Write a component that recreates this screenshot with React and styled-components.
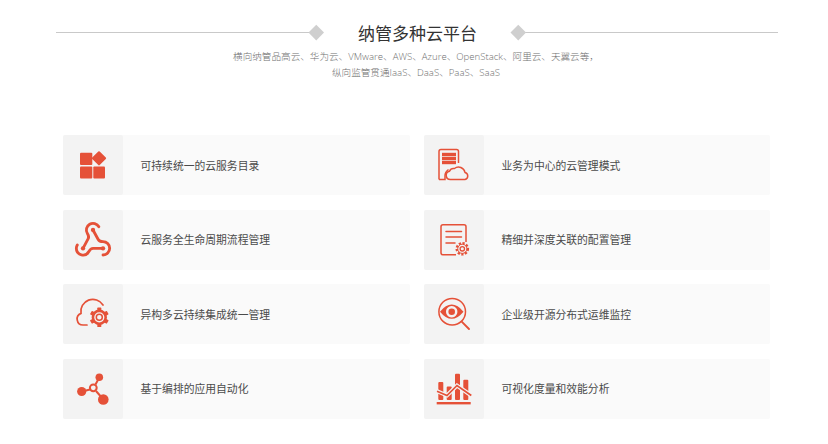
import React from "react";
import styled, { createGlobalStyle } from "styled-components";

const Global = createGlobalStyle`
  html, body { margin: 0; background: #fff; }
  body { font-family: "Open Sans", "Noto Sans CJK SC", sans-serif; }
`;
const Page = styled.div`
  width: 828px; height: 444px; overflow: hidden; box-sizing: border-box; padding-top: 20px;
`;
const Header = styled.header`
  display: flex; align-items: center; margin: 0 50px 0 56px; height: 25px;
`;
const Line = styled.div`
  flex: 1; height: 1px; background: #c9c9c9;
`;
const Diamond = styled.div`
  width: 10.5px; height: 10.5px; background: #cfcfcf; transform: rotate(45deg); flex: none;
  margin: ${p => (p.$side === "left" ? "0 3px 0 -8px" : "0 -8px 0 2px")};
`;
const Title = styled.h1`
  margin: 0; width: 186px; flex: none; text-align: center; font-weight: 400; font-size: 17px; line-height: 25px; color: #333;
  font-family: "Noto Sans CJK SC", sans-serif;
`;
const Sub = styled.p`
  margin: 0; padding: 4px 0 0 4px; text-align: center; font-size: 9.6px; line-height: 15.5px; color: #6f6f6f; font-weight: 300;
  font-family: "Open Sans", "Noto Sans CJK SC", sans-serif;
`;
const Grid = styled.div`
  display: grid; grid-template-columns: 347px 346px; column-gap: 14px; row-gap: 14.5px;
  margin: 55px 0 0 63px;
`;
const Card = styled.div`
  display: flex; align-items: center; height: 60px; background: #fafafa; border-radius: 2px;
`;
const IconBox = styled.div`
  width: 60px; height: 60px; flex: none; display: flex; align-items: center; justify-content: center;
  background: #f3f3f3; border-radius: 2px;
`;
const Label = styled.span`
  margin: -1px 0 0 17.5px; font-size: 10.8px; color: #4a4a4a; font-family: "Noto Sans CJK SC", sans-serif;
`;
const Svg = styled.svg`
  width: 40px; height: 40px; display: block; color: #e55138;
`;

const I = ({ children }) => (
  <Svg viewBox="0 0 40 40" fill="none" stroke="currentColor" strokeWidth="1.3">{children}</Svg>
);

const Catalog = () => (
  <I>
    <g fill="currentColor" stroke="none">
      <rect x="7" y="7.7" width="12.3" height="12.3" rx="1" />
      <rect x="7" y="21.5" width="12.3" height="12" rx="1" />
      <rect x="20.3" y="21.5" width="11.7" height="12" rx="1" />
      <rect x="20.7" y="8" width="10.6" height="10.6" rx="1" transform="rotate(45 26 13.3)" />
    </g>
  </I>
);
const Webhook = () => (
  <Svg viewBox="0 0 24 24" fill="none" stroke="currentColor" strokeWidth="1.7" strokeLinecap="round" strokeLinejoin="round">
    <path d="M18 16.98h-5.99c-1.1 0-1.95.94-2.48 1.9A4 4 0 0 1 2 17c.01-.7.2-1.4.57-2" />
    <path d="m6 17 3.13-5.78c.53-.97.1-2.18-.5-3.1a4 4 0 1 1 6.89-4.06" />
    <path d="m12 6 3.13 5.73C15.66 12.7 16.9 13 18 13a4 4 0 0 1 0 8" />
    <g fill="currentColor" stroke="none">
      <circle cx="12" cy="6" r="1.3" />
      <circle cx="6" cy="17" r="1.3" />
      <circle cx="18" cy="17" r="1.3" />
    </g>
  </Svg>
);
const gearTeeth = [0, 60, 120, 180, 240, 300];
const CloudGear = () => (
  <I>
    <path strokeWidth="1.7" strokeLinecap="round" d="M14 31 H10 A6 6 0 0 1 8 19.4 A12 12 0 0 1 30 11" />
    <g fill="currentColor" stroke="none">
      {gearTeeth.map(a => (
        <rect key={a} x="24.3" y="13.6" width="4" height="4" rx="0.6" transform={`rotate(${a} 26.3 23.3)`} />
      ))}
    </g>
    <circle cx="26.3" cy="23.3" r="6.4" strokeWidth="2.6" />
    <circle cx="26.3" cy="23.3" r="3" strokeWidth="1.5" />
  </I>
);
const Nodes = () => (
  <I>
    <g fill="currentColor" stroke="none">
      <circle cx="8.7" cy="22.5" r="4.6" />
      <circle cx="30.3" cy="30.5" r="5.3" />
      <circle cx="26.3" cy="8.2" r="3.8" />
    </g>
    <path strokeWidth="2" d="M9 22.5 L17 20.5 M22.5 15.5 L26 9 M23 22 L30 30" />
    <circle cx="20.3" cy="18.8" r="3.4" strokeWidth="2" />
  </I>
);
const ServerCloud = () => (
  <I>
    <path strokeWidth="1.5" d="M5 34.5 V6.5 A2 2 0 0 1 7 4.5 H22.5 A2 2 0 0 1 24.5 6.5 V18 M5 34.5 H11 V30.5 Q11 27 14.5 24.5" />
    <g fill="currentColor" stroke="none">
      <rect x="8" y="7.8" width="14" height="3.4" />
      <rect x="8" y="11.9" width="14" height="3.4" />
      <rect x="8" y="16" width="14" height="3.2" />
    </g>
    <path strokeWidth="1.5" fill="#f3f3f3" d="M16.5 34.5 A4.2 4.2 0 0 1 15.5 26.2 A4.5 4.5 0 0 1 20.5 23.5 A6.5 6.5 0 0 1 31 27.5 A3.6 3.6 0 0 1 31 34.5 Z" />
  </I>
);
const DocGear = () => (
  <I>
    <path strokeWidth="1.5" d="M22 34.8 H9 A2 2 0 0 1 7 32.8 V6.8 A2 2 0 0 1 9 4.8 H30 A2 2 0 0 1 32 6.8 V22" />
    <path strokeWidth="1.5" strokeLinecap="round" d="M12 11.5 H27.5 M12 17 H27.5 M12 23 H21" />
    <circle cx="28.3" cy="28.8" r="2.2" strokeWidth="1.3" />
    <circle cx="28.3" cy="28.8" r="5.6" strokeWidth="2.4" strokeDasharray="2.2 1.5" />
    <circle cx="28.3" cy="28.8" r="4.6" strokeWidth="1" />
  </I>
);
const EyeSearch = () => (
  <I>
    <circle cx="18.2" cy="17.7" r="13.3" strokeWidth="1.5" />
    <path strokeWidth="1.9" strokeLinecap="round" d="M27.7 27.7 L35 35" />
    <path fill="currentColor" stroke="none" fillRule="evenodd" d="M6 17.7 Q17.7 3.5 29.5 17.7 Q17.7 32 6 17.7 Z M17.7 12 a5.7 5.7 0 1 0 .01 0 Z" />
    <circle cx="17.7" cy="17.7" r="3.3" fill="currentColor" stroke="none" />
  </I>
);
const BarsChart = () => (
  <I>
    <g fill="currentColor" stroke="none">
      <rect x="4.3" y="13" width="5" height="18" rx="1" />
      <rect x="12.7" y="17.5" width="5" height="13.5" rx="1" />
      <rect x="21" y="4.8" width="5" height="26.2" rx="1" />
      <rect x="29.3" y="10.8" width="5" height="20.2" rx="1" />
      <rect x="2.7" y="33" width="34" height="2.4" />
    </g>
    <path stroke="#f3f3f3" strokeWidth="4" d="M3 22.2 L13 26.5 L23 16.5 L37.3 26.5" />
    <path strokeWidth="1.7" d="M3 22.2 L13 26.5 L23 16.5 L37.3 26.5" />
  </I>
);

const items = [
  [Catalog, "可持续统一的云服务目录"],
  [ServerCloud, "业务为中心的云管理模式"],
  [Webhook, "云服务全生命周期流程管理"],
  [DocGear, "精细并深度关联的配置管理"],
  [CloudGear, "异构多云持续集成统一管理"],
  [EyeSearch, "企业级开源分布式运维监控"],
  [Nodes, "基于编排的应用自动化"],
  [BarsChart, "可视化度量和效能分析"],
];

export default function App() {
  return (
    <Page>
      <Global />
      <Header>
        <Line />
        <Diamond $side="left" />
        <Title>纳管多种云平台</Title>
        <Diamond $side="right" />
        <Line />
      </Header>
      <Sub>
        横向纳管品高云、华为云、VMware、AWS、Azure、OpenStack、阿里云、天翼云等，<br />
        纵向监管贯通IaaS、DaaS、PaaS、SaaS
      </Sub>
      <Grid>
        {items.map(([Icon, text]) => (
          <Card key={text}>
            <IconBox><Icon /></IconBox>
            <Label>{text}</Label>
          </Card>
        ))}
      </Grid>
    </Page>
  );
}
